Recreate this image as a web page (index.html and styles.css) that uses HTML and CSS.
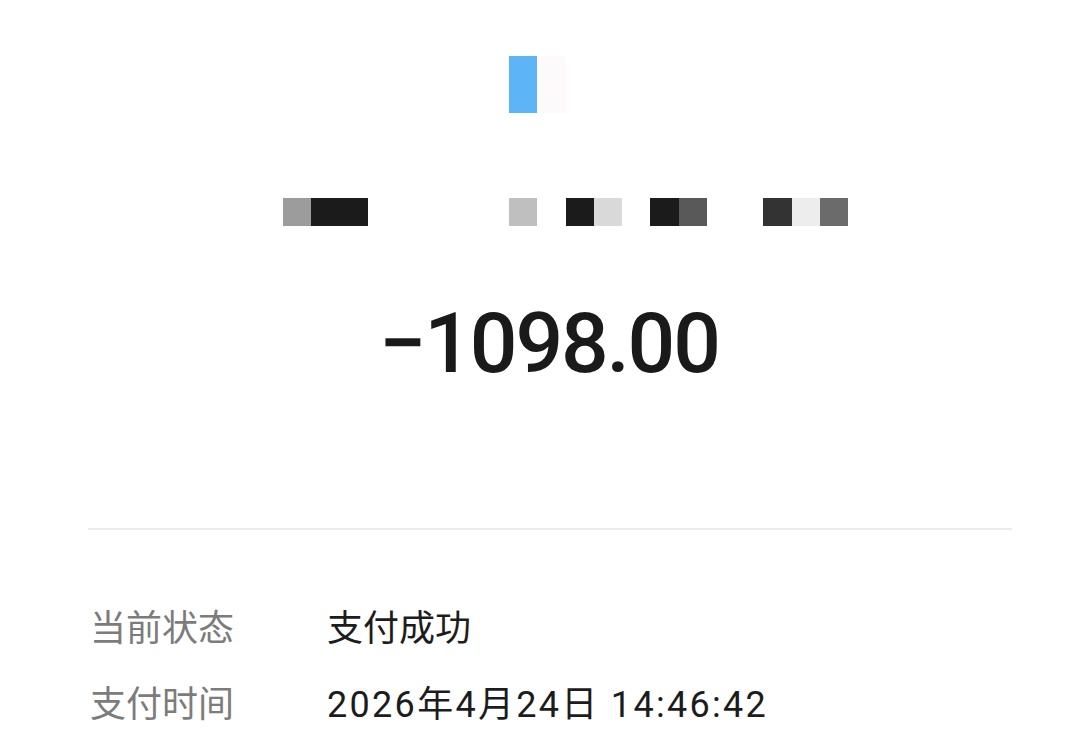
FILE: index.html
```html
<!DOCTYPE html>
<html lang="zh-CN">
<head>
<meta charset="utf-8">
<title>账单详情</title>
<link rel="stylesheet" href="styles.css">
</head>
<body>
<div class="page">
  <div class="mosaic">
    <div class="mrow tall">
      <span class="cell"></span><span class="cell"></span><span class="cell"></span><span class="cell"></span>
      <span class="cell"></span><span class="cell"></span><span class="cell"></span><span class="cell"></span>
      <span class="cell c-blue"></span><span class="cell c-faint"></span>
    </div>
    <div class="mrow spacer"></div>
    <div class="mrow">
      <span class="cell c-9c"></span><span class="cell c-1b"></span><span class="cell c-1b"></span><span class="cell"></span>
      <span class="cell"></span><span class="cell"></span><span class="cell"></span><span class="cell"></span>
      <span class="cell c-bf"></span><span class="cell"></span><span class="cell c-1b"></span><span class="cell c-d9"></span>
      <span class="cell"></span><span class="cell c-1b"></span><span class="cell c-59"></span><span class="cell"></span>
      <span class="cell"></span><span class="cell c-33"></span><span class="cell c-ed"></span><span class="cell c-6b"></span>
    </div>
  </div>

  <div class="amount">−1098.00</div>

  <div class="divider-wrap"><div class="divider"></div></div>

  <div class="details">
    <div class="row">
      <div class="label">当前状态</div>
      <div class="value">支付成功</div>
    </div>
    <div class="row">
      <div class="label">支付时间</div>
      <div class="value value-date">2026年4月24日 14:46:42</div>
    </div>
  </div>
</div>
</body>
</html>
```

FILE: styles.css
```css
html, body {
  margin: 0;
  padding: 0;
  background: #ffffff;
}

.page {
  width: 1080px;
  height: 745px;
  overflow: hidden;
  font-family: Roboto, "Noto Sans CJK SC", sans-serif;
  color: #1a1a1a;
}

.mosaic {
  padding-top: 56px;
  padding-left: 283px;
}

.mrow {
  display: flex;
  height: 28.25px;
}

.mrow.tall {
  height: 56.5px;
}

.mrow.spacer {
  height: 85px;
}

.cell {
  width: 28.25px;
  height: 100%;
  flex: none;
}

.c-blue { background: #5db5f8; }
.c-faint { background: #fcfafa; }
.c-9c { background: #9c9c9c; }
.c-1b { background: #1b1b1b; }
.c-bf { background: #bfbfbf; }
.c-d9 { background: #d9d9d9; }
.c-59 { background: #595959; }
.c-33 { background: #333333; }
.c-ed { background: #ededed; }
.c-6b { background: #6b6b6b; }

.amount {
  margin-top: 68px;
  height: 100px;
  line-height: 100px;
  font-size: 84px;
  font-weight: 500;
  letter-spacing: -2.2px;
  text-align: center;
  padding-left: 18px;
  color: #1a1a1a;
}

.divider-wrap {
  padding: 134px 68px 0 88px;
}

.divider {
  height: 2px;
  background: #ececec;
}

.details {
  margin-top: 61px;
  padding-left: 90px;
}

.row {
  display: flex;
  height: 76px;
  line-height: 76px;
  font-size: 36px;
}

.label {
  width: 237px;
  flex: none;
  color: #7c7c7c;
}

.value {
  color: #1c1c1c;
}

.value-date {
  letter-spacing: 2.3px;
}
```
